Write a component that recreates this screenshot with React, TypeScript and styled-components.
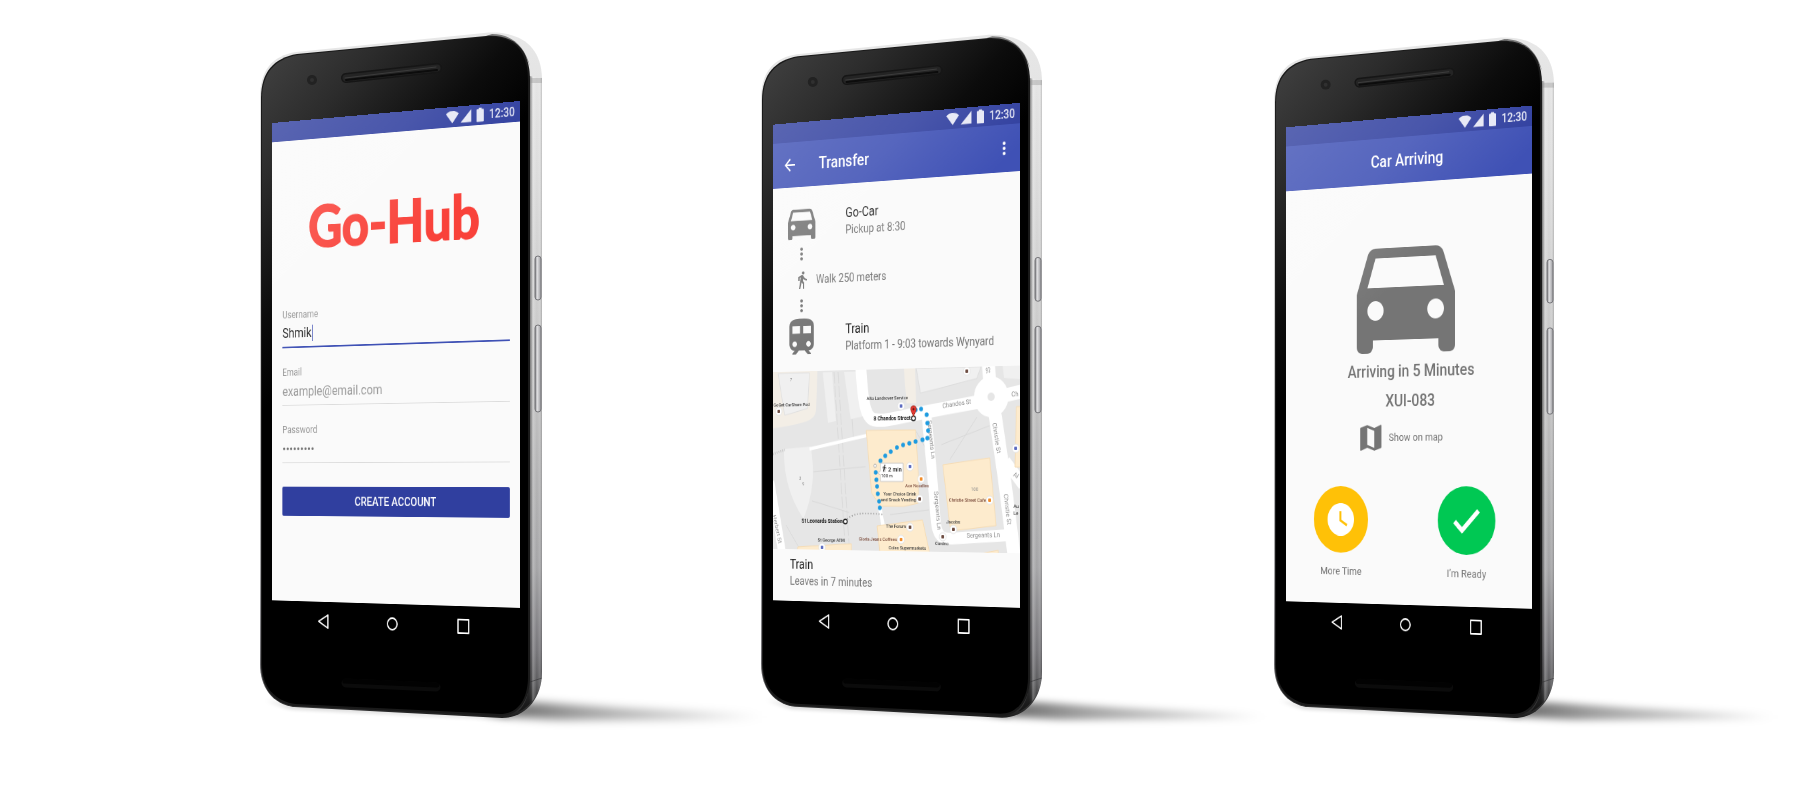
import React, { useId } from 'react';
import styled, { createGlobalStyle, css } from 'styled-components';

/* ---------- perspective ---------- */

type Point = [number, number];

const SCREEN_W = 360;
const SCREEN_H = 640;
const BODY_W = 282;
const BODY_H = 686;

/* Where the corners of the 360x640 display sit on the tilted handset. */
const DISPLAY_CORNERS: Point[] = [
  [12, 91],
  [260, 69],
  [260, 617],
  [12, 607],
];

/* Projects a flat w x h box onto four corners, as a CSS matrix3d. */
function projectOnto(w: number, h: number, corners: Point[]): string {
  const [[x0, y0], [x1, y1], [x2, y2], [x3, y3]] = corners;
  const dx1 = x1 - x2;
  const dx2 = x3 - x2;
  const dx3 = x0 - x1 + x2 - x3;
  const dy1 = y1 - y2;
  const dy2 = y3 - y2;
  const dy3 = y0 - y1 + y2 - y3;
  const det = dx1 * dy2 - dx2 * dy1;
  const g = (dx3 * dy2 - dx2 * dy3) / det;
  const k = (dx1 * dy3 - dx3 * dy1) / det;
  const m = [
    (x1 - x0 + g * x1) / w, (y1 - y0 + g * y1) / w, 0, g / w,
    (x3 - x0 + k * x3) / h, (y3 - y0 + k * y3) / h, 0, k / h,
    0, 0, 1, 0,
    x0, y0, 0, 1,
  ];
  return `matrix3d(${m.map((n) => n.toFixed(9)).join(',')})`;
}

/* ---------- page ---------- */

const GlobalStyle = createGlobalStyle`
  * { box-sizing: border-box; }
  body {
    margin: 0;
    background: #fff;
    font-family: Roboto, 'Liberation Sans', sans-serif;
  }
  button, input { font: inherit; color: inherit; border: 0; background: none; padding: 0; margin: 0; }
  h1, h2, h3, p { margin: 0; }
`;

const Showcase = styled.main`
  display: grid;
  grid-template-columns: 501fr 513fr 526fr;
  align-items: end;
  padding: 32px 0 82px 14.44%;
  overflow: hidden;
`;

const Handset = styled.section<{ $width: number }>`
  display: grid;
  grid-template: 100% / 100%;
  justify-items: start;
  width: ${(p) => p.$width}px;
  height: ${(p) => Math.round((p.$width * BODY_H) / BODY_W)}px;

  > * { grid-area: 1 / 1; }
`;

const BodyDrawing = styled.svg`
  display: block;
  width: 100%;
  height: 100%;
  overflow: visible;
`;

const Display = styled.div<{ $width: number }>`
  display: flex;
  flex-direction: column;
  width: ${SCREEN_W}px;
  height: ${SCREEN_H}px;
  transform-origin: 0 0;
  will-change: transform;
  ${(p) => {
    const s = p.$width / BODY_W;
    const corners = DISPLAY_CORNERS.map(([x, y]) => [x * s, y * s] as Point);
    return css`transform: ${projectOnto(SCREEN_W, SCREEN_H, corners)};`;
  }}
`;

const AppView = styled.div`
  position: relative;
  flex: 1;
  display: flex;
  flex-direction: column;
  overflow: hidden;
  background: #fafafa;

  &::after {
    content: '';
    position: absolute;
    inset: 0;
    pointer-events: none;
    background: linear-gradient(142deg, rgba(255, 255, 255, 0.2), rgba(255, 255, 255, 0.12) 20%, transparent 38%);
  }
`;

const NavBar = styled.nav`
  display: flex;
  justify-content: space-between;
  align-items: center;
  height: 48px;
  padding: 0 67px;
`;

const IconButton = styled.button`
  display: flex;
  cursor: pointer;
`;

/* ---------- bars ---------- */

const StatusBar = styled.header`
  display: flex;
  align-items: center;
  justify-content: flex-end;
  gap: 1px;
  height: 24px;
  padding-right: 7px;
  background: #303f9f;
  color: #e6e8f5;
`;

const Clock = styled.time`
  margin-left: 1px;
  font-size: 14px;
  line-height: 24px;
  font-weight: 500;
`;

const AppBar = styled.div<{ $centered?: boolean }>`
  display: flex;
  align-items: center;
  justify-content: ${(p) => (p.$centered ? 'center' : 'flex-start')};
  gap: 32px;
  height: 56px;
  padding: 0 10px 0 14px;
  background: #3f51b5;
  color: #fff;
`;

const AppTitle = styled.h2<{ $grow?: boolean }>`
  flex: ${(p) => (p.$grow ? 1 : 'none')};
  font-size: 20px;
  line-height: 24px;
  font-weight: 500;
`;

/* ---------- sign-up ---------- */

const Brand = styled.h1`
  padding: 66px 0 38px;
  text-align: center;
  font-family: Lato, 'Open Sans', sans-serif;
  font-size: 70px;
  line-height: 80px;
  font-weight: 700;
  color: #f9423a;
  -webkit-text-stroke: 2px #f9423a;
`;

const SignUpForm = styled.form`
  display: flex;
  flex-direction: column;
  padding: 24px 14px 0 16px;
`;

const Field = styled.div`
  display: flex;
  flex-direction: column;
  height: 71px;
`;

const FieldLabel = styled.label`
  font-size: 12px;
  line-height: 14px;
  color: #9a9a9a;
`;

const FieldLine = styled.div<{ $active?: boolean }>`
  display: flex;
  align-items: center;
  height: 34px;
  border-bottom: ${(p) => (p.$active ? '2px solid #3f51b5' : '1px solid #dcdcdc')};
`;

const TextInput = styled.input<{ $fit?: boolean }>`
  ${(p) => (p.$fit ? 'field-sizing: content;' : 'flex: 1;')}
  font-size: 16px;
  line-height: 20px;
  color: #212121;
  outline: none;

  &::placeholder { color: #9a9a9a; opacity: 1; }
  &[type='password'] { color: #757575; }
`;

const Caret = styled.span`
  width: 1px;
  height: 20px;
  margin-left: 1px;
  background: #3f51b5;
`;

const SubmitButton = styled.button`
  height: 36px;
  margin-top: 6px;
  padding-left: 6px;
  border-radius: 2px;
  background: #303f9f;
  color: #fff;
  font-size: 14px;
  font-weight: 500;
  text-transform: uppercase;
  cursor: pointer;
`;

/* ---------- transfer ---------- */

const Route = styled.div`
  display: flex;
  flex-direction: column;
  padding: 16px 16px 14px;
  color: #757575;
`;

const Leg = styled.div`
  display: grid;
  grid-template-columns: 94px 1fr;
  align-items: center;
  height: 56px;
`;

const LegText = styled.div`
  padding-top: 3px;
`;

const WalkLeg = styled.div`
  display: flex;
  align-items: center;
  gap: 9px;
  height: 42px;
  padding-left: 17px;
  font-size: 14px;
  line-height: 20px;
`;

const Connector = styled.div`
  display: flex;
  align-items: center;
  justify-content: center;
  width: 56px;
  height: 22px;
`;

const StopName = styled.h3`
  font-size: 16px;
  line-height: 20px;
  font-weight: 400;
  color: #212121;
`;

const StopDetail = styled.p`
  font-size: 14px;
  line-height: 20px;
  color: #757575;
`;

const MapDrawing = styled.svg`
  display: block;
  width: 360px;
  height: 220px;
  overflow: hidden;
`;

const NextDeparture = styled.div`
  padding: 9px 26px;
`;

/* ---------- arriving ---------- */

const Arrival = styled.div`
  display: flex;
  flex-direction: column;
  align-items: center;
  padding-top: 38px;
  color: #757575;
`;

const CarHero = styled.div`
  height: 172px;
`;

const ArrivalText = styled.p`
  padding-left: 14px;
  font-size: 20px;
  line-height: 36px;
  font-weight: 500;
`;

const MapLink = styled.a`
  display: flex;
  align-items: center;
  gap: 6px;
  margin-top: 6px;
  padding-right: 18px;
  color: inherit;
  font-size: 13px;
  line-height: 40px;
  text-decoration: none;
`;

const Actions = styled.div`
  display: flex;
  gap: 102px;
  margin-top: 38px;
  padding-right: 8px;
`;

const Action = styled.button`
  display: flex;
  flex-direction: column;
  align-items: center;
  gap: 13px;
  width: 82px;
  color: #757575;
  font-size: 13px;
  line-height: 20px;
  cursor: pointer;
`;

const ActionDisc = styled.span<{ $color: string }>`
  display: flex;
  align-items: center;
  justify-content: center;
  width: 82px;
  height: 82px;
  border-radius: 50%;
  background: ${(p) => p.$color};
  color: #fff;
`;

/* ---------- icons ---------- */

const GLYPHS = {
  wifi: 'M12 22 0 7C3 4 7 2.500 12 2.500S21 4 24 7Z',
  signal: 'M2 22h20V2Z',
  battery: 'M16.500 4H14.500V2h-5v2H7.500C6.700 4 6 4.600 6 5.300v15.300C6 21.400 6.700 22 7.500 22h9C17.300 22 18 21.400 18 20.700V5.300C18 4.600 17.300 4 16.500 4Z',
  back: 'M20 11H7.830l5.590-5.590L12 4l-8 8 8 8 1.410-1.410L7.830 13H20v-2z',
  more: 'M12 8c1.100 0 2-.9 2-2s-.9-2-2-2-2 .9-2 2 .9 2 2 2zm0 2c-1.100 0-2 .9-2 2s.9 2 2 2 2-.9 2-2-.9-2-2-2zm0 6c-1.100 0-2 .9-2 2s.9 2 2 2 2-.9 2-2-.9-2-2-2z',
  car: 'M18.920 6.010C18.720 5.420 18.160 5 17.500 5h-11c-.66 0-1.210.42-1.420 1.010L3 12v8c0 .55.45 1 1 1h1c.55 0 1-.45 1-1v-1h12v1c0 .55.45 1 1 1h1c.55 0 1-.45 1-1v-8l-2.080-5.990zM6.500 16c-.83 0-1.500-.67-1.500-1.500S5.670 13 6.500 13s1.500.67 1.500 1.500S7.330 16 6.500 16zm11 0c-.83 0-1.500-.67-1.500-1.500s.67-1.500 1.500-1.500 1.500.67 1.500 1.500-.67 1.500-1.500 1.500zM5 11l1.500-4.500h11L19 11H5z',
  walk: 'M13.500 5.500c1.100 0 2-.9 2-2s-.9-2-2-2-2 .9-2 2 .9 2 2 2zM9.800 8.900 7 23h2.100l1.800-8 2.100 2v6h2v-7.500l-2.100-2 .6-3C14.800 12 16.800 13 19 13v-2c-1.900 0-3.500-1-4.300-2.400l-1-1.600c-.4-.6-1-1-1.700-1-.3 0-.5.1-.8.1L6 8.300V13h2V9.600l1.800-.7',
  train: 'M12 2c-4 0-8 .5-8 4v9.500C4 17.430 5.570 19 7.500 19L6 20.500v.5h2.230l2-2H14l2 2h2v-.5L16.500 19c1.930 0 3.500-1.570 3.500-3.500V6c0-3.500-3.580-4-8-4zM7.500 17c-.83 0-1.500-.67-1.500-1.500S6.670 14 7.500 14s1.500.67 1.500 1.500S8.330 17 7.500 17zm3.500-7H6V6h5v4zm2 0V6h5v4h-5zm3.500 7c-.83 0-1.500-.67-1.500-1.500s.67-1.500 1.500-1.500 1.500.67 1.500 1.500-.67 1.500-1.500 1.500z',
  map: 'M20.500 3l-.16.03L15 5.100 9 3 3.360 4.900c-.21.07-.36.25-.36.48V20.500c0 .28.22.5.5.5l.16-.03L9 18.900l6 2.100 5.640-1.900c.21-.07.36-.25.36-.48V3.500c0-.28-.22-.5-.5-.5zM15 19l-6-2.110V5l6 2.110V19z',
  later: 'M12 2C6.500 2 2 6.500 2 12s4.500 10 10 10 10-4.500 10-10S17.500 2 12 2zm4.200 14.200L11 13V7h1.500v5.200l4.500 2.700-.8 1.300z',
  check: 'M9 15.700 4.900 11.600l-1.900 1.900L9 19.500 21.200 7.300l-1.900-1.900L9 15.700z',
};

const Glyph = styled.svg`
  display: block;
  flex: none;
  overflow: visible;
`;

function Icon({ name, size = 24 }: { name: keyof typeof GLYPHS; size?: number }) {
  return (
    <Glyph width={size} height={size} viewBox="0 0 24 24" fill="currentColor" aria-hidden="true">
      <path d={GLYPHS[name]} />
    </Glyph>
  );
}

function NavIcon({ children }: { children: React.ReactNode }) {
  return (
    <Glyph width={24} height={24} viewBox="0 0 24 24" fill="none" stroke="#fff" strokeWidth="1.800" strokeLinejoin="round">
      {children}
    </Glyph>
  );
}

/* ---------- handset ---------- */

function HandsetBody() {
  const id = useId();
  const ref = (name: string) => `url(#${id}${name})`;
  return (
    <BodyDrawing viewBox={`0 0 ${BODY_W} ${BODY_H}`} aria-hidden="true">
      <defs>
        <linearGradient id={`${id}metal`} x1="0" y1="0" x2="0" y2="1">
          <stop offset="0" stopColor="#e8e8e8" />
          <stop offset="0.2" stopColor="#dcdcdc" />
          <stop offset="0.5" stopColor="#c4c4c4" />
          <stop offset="0.78" stopColor="#a4a4a6" />
          <stop offset="0.9" stopColor="#77767a" />
          <stop offset="0.95" stopColor="#5a5a5c" />
          <stop offset="1" stopColor="#1c1c1c" />
        </linearGradient>
        <linearGradient id={`${id}edge`} gradientUnits="userSpaceOnUse" x1="269" y1="0" x2="282" y2="0">
          <stop offset="0" stopColor="#000" stopOpacity="0.5" />
          <stop offset="0.18" stopColor="#000" stopOpacity="0.22" />
          <stop offset="0.3" stopColor="#fff" stopOpacity="0.25" />
          <stop offset="0.6" stopColor="#fff" stopOpacity="0" />
          <stop offset="0.85" stopColor="#fff" stopOpacity="0.15" />
          <stop offset="1" stopColor="#000" stopOpacity="0.15" />
        </linearGradient>
        <linearGradient id={`${id}glass`} gradientUnits="userSpaceOnUse" x1="0" y1="20" x2="180" y2="180">
          <stop offset="0" stopColor="#424242" />
          <stop offset="0.35" stopColor="#2c2c2c" />
          <stop offset="0.75" stopColor="#0c0c0c" />
          <stop offset="1" stopColor="#000" />
        </linearGradient>
        <linearGradient id={`${id}key`} x1="0" y1="0" x2="1" y2="0">
          <stop offset="0" stopColor="#6e6e72" />
          <stop offset="0.35" stopColor="#e2e2e4" />
          <stop offset="1" stopColor="#9a9a9e" />
        </linearGradient>
        <linearGradient id={`${id}cast`} gradientUnits="userSpaceOnUse" x1="240" y1="0" x2="500" y2="0">
          <stop offset="0" stopColor="#000" stopOpacity="0.6" />
          <stop offset="0.3" stopColor="#000" stopOpacity="0.38" />
          <stop offset="0.65" stopColor="#000" stopOpacity="0.2" />
          <stop offset="1" stopColor="#000" stopOpacity="0" />
        </linearGradient>
        <filter id={`${id}soft`} filterUnits="userSpaceOnUse" x="-60" y="600" width="640" height="140">
          <feGaussianBlur stdDeviation="9 4" />
        </filter>
        <filter id={`${id}tight`} filterUnits="userSpaceOnUse" x="-40" y="640" width="360" height="80">
          <feGaussianBlur stdDeviation="3 2" />
        </filter>
      </defs>

      <path d="M230 676 L270 670 L360 676 L500 682 L500 688 L300 688 L235 684Z" fill={ref('cast')} filter={ref('soft')} />
      <path d="M6 668 L30 674 L250 686 L250 687 L30 676Z" fill="#000" opacity="0.35" filter={ref('tight')} />

      <path
        d="M0 66 C0 38 12 24 36 20 L224 1 C258 -2 281 12 282 46 L282 640 C282 668 264 686 242 686 L34 675 C12 672 0 655 0 632Z"
        fill={ref('metal')}
      />
      <path d="M269 44 L269 645 C269 662 266 672 258 680 C272 674 282 660 282 640 L282 46Z" fill={ref('edge')} />
      <path d="M232 2 C250 2 264 12 270 34 C262 14 246 5 226 4Z" fill="#333" opacity="0.6" />
      <path d="M270 46h12v5h-12z" fill="#8c8c8c" opacity="0.35" />
      <path d="M270 650 L282 646" stroke="#2c2c2e" strokeWidth="1" opacity="0.5" />
      <path
        d="M1 66 C1 40 14 26 37 22 L226 4 C255 2 270 18 270 48 L270 645 C270 668 259 684 240 684 L34 674 C12 671 1 655 1 632Z"
        fill="#1a1a1a"
      />
      <path
        d="M2 67 C2 41 15 27 38 23 L226 5 C253 3 268 18 268 48 L268 645 C268 667 258 682 240 682 L35 672 C14 669 2 654 2 632Z"
        fill={ref('glass')}
      />

      <circle cx="52" cy="48" r="5" fill="#222" />
      <circle cx="52" cy="48" r="2" fill="#303030" />
      <g fill="none" strokeLinecap="round">
        <path d="M86 46 L177 36" stroke="#161616" strokeWidth="10" />
        <path d="M86 46 L177 36" stroke="#242424" strokeWidth="7" />
        <path d="M86 48 L177 38" stroke="#0c0c0c" strokeWidth="2" />
        <path d="M85 46 L176 35" stroke="#3c3c3c" strokeWidth="1" />
        <path d="M86 651 L176 655" stroke="#0b0b0b" strokeWidth="9" />
        <path d="M85 649 L177 653" stroke="#020202" strokeWidth="5" />
      </g>
      <rect x="275" y="224" width="6" height="44" rx="3" fill={ref('key')} stroke="#77777b" strokeWidth="1" />
      <rect x="275" y="293" width="6" height="87" rx="3" fill={ref('key')} stroke="#77777b" strokeWidth="1" />
    </BodyDrawing>
  );
}

function Status() {
  return (
    <StatusBar>
      <Icon name="wifi" size={18} />
      <Icon name="signal" size={18} />
      <Icon name="battery" size={20} />
      <Clock>12:30</Clock>
    </StatusBar>
  );
}

function Phone({ label, width, children }: { label: string; width: number; children: React.ReactNode }) {
  return (
    <Handset $width={width} aria-label={label}>
      <HandsetBody />
      <Display $width={width}>
        <AppView>
          <Status />
          {children}
        </AppView>
        <NavBar aria-label="System navigation">
          <IconButton type="button" aria-label="Back">
            <NavIcon><path d="M4 12 18 4v16Z" /></NavIcon>
          </IconButton>
          <IconButton type="button" aria-label="Home">
            <NavIcon><circle cx="12" cy="12" r="7" /></NavIcon>
          </IconButton>
          <IconButton type="button" aria-label="Overview">
            <NavIcon><path d="M5 4h15v16H5Z" /></NavIcon>
          </IconButton>
        </NavBar>
      </Display>
    </Handset>
  );
}

/* ---------- map ---------- */

const ROUTE_DOTS: Point[] = [
  [213, 50], [221, 49], [229, 56], [230, 66], [231, 75], [230, 84], [223, 86],
  [213, 88], [204, 90], [195, 92], [186, 95], [177, 100], [169, 105], [162, 111],
  [155, 125], [156, 134], [157, 142], [158, 151], [160, 160], [161, 168],
];

type Place = { text: string; x: number; y: number; kind?: 'brown' | 'bold'; end?: boolean };

const PLACES: Place[] = [
  { text: 'Alto Landrover Service', x: 202, y: 37, end: true },
  { text: 'GoGet CarShare Pod', x: 1, y: 43 },
  { text: '8 Chandos Street', x: 206, y: 62, kind: 'bold', end: true },
  { text: 'Ace Noodles', x: 232, y: 143, kind: 'brown', end: true },
  { text: 'Your Choice Drink', x: 214, y: 153, end: true },
  { text: 'and Snack Vending', x: 214, y: 160, end: true },
  { text: 'Christie Street Cafe', x: 313, y: 160, kind: 'brown', end: true },
  { text: 'Jacobs', x: 257, y: 186 },
  { text: 'Cardno', x: 241, y: 212 },
  { text: 'The Forum', x: 199, y: 192, end: true },
  { text: 'Gloria Jeans Coffees', x: 186, y: 208, kind: 'brown', end: true },
  { text: 'Coles Supermarkets', x: 228, y: 218, end: true },
  { text: 'St George ATM', x: 109, y: 210, end: true },
  { text: 'St Leonards Station', x: 106, y: 187, kind: 'bold', end: true },
  { text: 'Au', x: 351, y: 167 },
  { text: 'Le', x: 351, y: 175 },
];

const STREETS = [
  { text: 'Chandos St', x: 272, y: 46, angle: -7 },
  { text: 'Christie St', x: 325, y: 85, angle: 80 },
  { text: 'Christie St', x: 340, y: 169, angle: 82 },
  { text: 'Sergeants Ln', x: 233, y: 86, angle: 83 },
  { text: 'Sergeants Ln', x: 242, y: 171, angle: 84 },
  { text: 'Sergeants Ln', x: 309, y: 202, angle: -2 },
  { text: 'St', x: 313, y: 5, angle: 80 },
  { text: 'Herbert St', x: 4, y: 196, angle: 75 },
  { text: 'Ch', x: 353, y: 36, angle: -2 },
  { text: 'Al', x: 353, y: 131, angle: 28 },
];

const PINS: { x: number; y: number; color: string }[] = [
  { x: 192, y: 45, color: '#5c6bc0' },
  { x: 205, y: 118, color: '#5c6bc0' },
  { x: 354, y: 97, color: '#5c6bc0' },
  { x: 75, y: 217, color: '#5c6bc0' },
  { x: 221, y: 133, color: '#f28c28' },
  { x: 318, y: 158, color: '#f28c28' },
  { x: 192, y: 206, color: '#f28c28' },
  { x: 219, y: 157, color: '#6d4c41' },
  { x: 205, y: 191, color: '#6d4c41' },
  { x: 267, y: 193, color: '#6d4c41' },
  { x: 252, y: 202, color: '#6d4c41' },
  { x: 286, y: 5, color: '#6d4c41' },
  { x: 9, y: 49, color: '#6d4c41' },
];

function WalkingMap() {
  return (
    <MapDrawing viewBox="0 0 360 220" role="img" aria-label="Walking route from St Leonards Station to 8 Chandos Street">
      <rect width="360" height="220" fill="#e6e6e6" />
      <g fill="#f0f0f0">
        <path d="M0 0H68L66 48C64 62 50 64 0 70Z" fill="#f3eee6" />
        <path d="M8 2H56L53 46 18 54Z" stroke="#e0e0e0" />
        <path d="M76 2H90L96 62 84 64Z" />
        <path d="M108 2H126L140 56 118 60Z" />
        <path d="M196 0H212L214 42 200 42Z" fill="#f3eee6" />
        <path d="M214 0H306L300 14 220 30Z" stroke="#dcdcdc" />
        <path d="M336 0H360V16L338 14Z" />
        <path d="M17 96 58 93C64 126 62 150 47 182 28 160 16 130 17 96Z" />
      </g>
      <g fill="none" stroke="#d8d8d8" strokeWidth="1">
        <path d="M93 2 110 220M99 2 116 220" strokeDasharray="14 3" />
        <path d="M62 124 140 118M60 160 116 174M214 76 230 100M250 92 318 70M176 176 232 170M20 190 40 218M262 110 300 60M120 60 122 84" />
      </g>
      <g fill="none" stroke="#fff" strokeLinecap="butt">
        <path d="M133 -4C136 40 140 58 152 61 170 64 190 58 232 52L300 42 364 30" strokeWidth="16" strokeLinejoin="round" />
        <path d="M133 -4 140 40" strokeWidth="11" />
        <path d="M316 -4 320 36 326 60 338 130 352 224" strokeWidth="18" />
        <path d="M228 50 236 120 242 184C244 200 250 205 264 204L344 199" strokeWidth="14" />
        <path d="M340 112 364 140" strokeWidth="14" />
        <path d="M56 96 142 80" strokeWidth="4" />
        <path d="M161 168 166 190" strokeWidth="5" />
        <path d="M-4 136 14 224" strokeWidth="12" />
      </g>
      <circle cx="320" cy="36" r="24" fill="#fff" />
      <circle cx="320" cy="36" r="5" fill="#e6e6e6" />
      <g fill="#fdebcd" stroke="#f6dcb4" strokeWidth="1">
        <path d="M141 74 213 74 217 126 217 162 196 166 162 166 149 150Z" />
        <path d="M252 116 318 108 327 188 263 195Z" />
        <path d="M157 190 223 182 233 221H161Z" />
        <path d="M38 221V217L119 212V221Z" />
        <path d="M355 48H362V119L353 119Z" />
        <path d="M306 221 330 217V221Z" />
      </g>
      <path d="M0 102 18 97" stroke="#bdbdbd" strokeWidth="3" strokeDasharray="1 2" />
      <path d="M113 182C122 174 140 174 166 176" fill="none" stroke="#8a8a8a" strokeWidth="2" strokeDasharray="1 3" />

      <g fontSize="8" fill="#8a8a8a" textAnchor="middle">
        {STREETS.map((s, i) => (
          <text key={i} transform={`translate(${s.x} ${s.y}) rotate(${s.angle})`}>{s.text}</text>
        ))}
      </g>

      <g fill="#1e9be0">
        {ROUTE_DOTS.map(([x, y]) => <circle key={`${x}-${y}`} cx={x} cy={y} r="2.800" />)}
      </g>

      {PINS.map((p) => (
        <g key={`${p.x}-${p.y}`}>
          <circle cx={p.x} cy={p.y} r="5" fill="#fff" stroke="#e4e4e4" strokeWidth="1" />
          <rect x={p.x - 2} y={p.y - 2} width="4" height="4" rx="1" fill={p.color} />
        </g>
      ))}

      <g fontSize="6" fill="#8a8a8a">
        <text x="26" y="12">7</text>
        <text x="40" y="134">3</text>
        <text x="45" y="141">9</text>
        <text x="292" y="147">100</text>
      </g>

      {PLACES.map((p) => (
        <text
          key={p.text}
          x={p.x}
          y={p.y}
          fontSize={p.kind === 'bold' ? 7 : 6}
          fontWeight={p.kind === 'bold' ? 700 : 500}
          fill={p.kind === 'brown' ? '#7a4a3a' : p.kind === 'bold' ? '#111' : '#3c3c3c'}
          textAnchor={p.end ? 'end' : 'start'}
        >
          {p.text}
        </text>
      ))}

      <g fill="#fff" stroke="#222" strokeWidth="1.500">
        <circle cx="210" cy="60" r="2.800" />
        <circle cx="110" cy="185" r="2.800" />
      </g>
      <circle cx="154" cy="117" r="2" fill="#fff" stroke="#aaa" strokeWidth="1" />
      <path d="M210 58C209 54 206 52 206 49 206 46 208 45 210 45S214 46 214 49C214 52 211 54 210 58Z" fill="#e53935" stroke="#a52714" strokeWidth="1" />
      <circle cx="210" cy="49" r="1.500" fill="#6b1a10" />

      <path d="M162 114H195V136H162V128L158 126 162 123Z" fill="#fff" stroke="#c8c8c8" strokeWidth="1" />
      <g transform="translate(163 115) scale(0.400)" fill="#222"><path d={GLYPHS.walk} /></g>
      <g fill="#222">
        <text x="173" y="124" fontSize="8" fontWeight="500">2 min</text>
        <text x="163" y="131" fontSize="6">100 m</text>
      </g>
    </MapDrawing>
  );
}

/* ---------- screens ---------- */

function SignUpScreen() {
  const id = useId();
  return (
    <>
      <Brand>Go-Hub</Brand>
      <SignUpForm>
        <Field>
          <FieldLabel htmlFor={`${id}user`}>Username</FieldLabel>
          <FieldLine $active>
            <TextInput id={`${id}user`} type="text" defaultValue="Shmik" $fit />
            <Caret />
          </FieldLine>
        </Field>
        <Field>
          <FieldLabel htmlFor={`${id}email`}>Email</FieldLabel>
          <FieldLine>
            <TextInput id={`${id}email`} type="email" placeholder="example@email.com" />
          </FieldLine>
        </Field>
        <Field>
          <FieldLabel htmlFor={`${id}pass`}>Password</FieldLabel>
          <FieldLine>
            <TextInput id={`${id}pass`} type="password" defaultValue="gohub1234" />
          </FieldLine>
        </Field>
        <SubmitButton type="button">Create account</SubmitButton>
      </SignUpForm>
    </>
  );
}

function TransferScreen() {
  return (
    <>
      <AppBar>
        <IconButton type="button" aria-label="Go back"><Icon name="back" /></IconButton>
        <AppTitle $grow>Transfer</AppTitle>
        <IconButton type="button" aria-label="More options"><Icon name="more" /></IconButton>
      </AppBar>
      <Route>
        <Leg>
          <Icon name="car" size={56} />
          <LegText>
            <StopName>Go-Car</StopName>
            <StopDetail>Pickup at 8:30</StopDetail>
          </LegText>
        </Leg>
        <Connector><Icon name="more" /></Connector>
        <WalkLeg>
          <Icon name="walk" />
          Walk 250 meters
        </WalkLeg>
        <Connector><Icon name="more" /></Connector>
        <Leg>
          <Icon name="train" size={56} />
          <LegText>
            <StopName>Train</StopName>
            <StopDetail>Platform 1 - 9:03 towards Wynyard</StopDetail>
          </LegText>
        </Leg>
      </Route>
      <WalkingMap />
      <NextDeparture>
        <StopName>Train</StopName>
        <StopDetail>Leaves in 7 minutes</StopDetail>
      </NextDeparture>
    </>
  );
}

function ArrivingScreen() {
  return (
    <>
      <AppBar $centered>
        <AppTitle>Car Arriving</AppTitle>
      </AppBar>
      <Arrival>
        <CarHero><Icon name="car" size={192} /></CarHero>
        <ArrivalText>Arriving in 5 Minutes</ArrivalText>
        <ArrivalText>XUI-083</ArrivalText>
        <MapLink href="#map">
          <Icon name="map" size={42} />
          Show on map
        </MapLink>
        <Actions>
          <Action type="button">
            <ActionDisc $color="#ffc107"><Icon name="later" size={48} /></ActionDisc>
            More Time
          </Action>
          <Action type="button">
            <ActionDisc $color="#00c853"><Icon name="check" size={50} /></ActionDisc>
            I&#8217;m Ready
          </Action>
        </Actions>
      </Arrival>
    </>
  );
}

export default function App() {
  return (
    <>
      <GlobalStyle />
      <Showcase>
        <Phone label="Create account" width={282}><SignUpScreen /></Phone>
        <Phone label="Transfer" width={281}><TransferScreen /></Phone>
        <Phone label="Car arriving" width={280}><ArrivingScreen /></Phone>
      </Showcase>
    </>
  );
}
